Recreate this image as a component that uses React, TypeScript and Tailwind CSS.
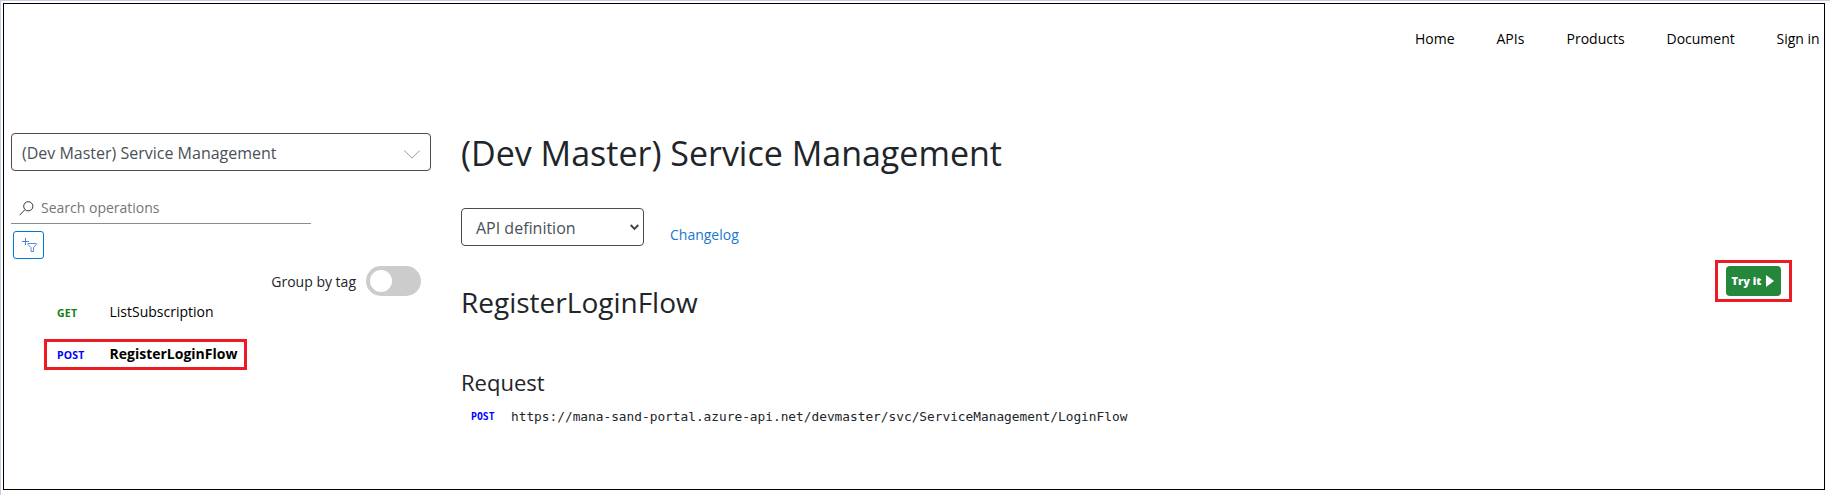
const navItems = [
  { label: "Home", width: "w-[81.5px]" },
  { label: "APIs", width: "w-[70px]" },
  { label: "Products", width: "w-[100px]" },
  { label: "Document", width: "w-[110px]" },
  { label: "Sign in", width: "w-[47.5px]" },
];

function NavBar() {
  return (
    <nav className="flex h-[71px] items-center justify-end pb-[2px] text-sm text-black">
      {navItems.map((item) => (
        <a key={item.label} className={`shrink-0 whitespace-nowrap ${item.width}`}>
          {item.label}
        </a>
      ))}
    </nav>
  );
}

function Sidebar() {
  return (
    <aside className="flex w-[457px] shrink-0 flex-col pl-[7px]">
      <div className="mt-[58px] flex h-[38px] w-[420px] items-center justify-between rounded border border-[#4a4a4f] pr-[10px] pl-[10px]">
        <span className="mt-[2px] text-base text-[#495057]">(Dev Master) Service Management</span>
        <svg className="mt-[4px]" width="16" height="9" viewBox="0 0 16 9" fill="none" stroke="#8c8c8c" strokeWidth="0.9">
          <path d="M0.3 0.5 L8 8.2 L15.7 0.5" />
        </svg>
      </div>

      <div className="mt-[20px] flex h-[33px] w-[300px] items-center border-b border-[#8c8c8c] pt-[2px] pl-[8px]">
        <svg width="15" height="15" viewBox="0 0 15 15" fill="none" stroke="#333333" strokeWidth="1">
          <circle cx="9.3" cy="5.3" r="4.6" />
          <path d="M5.8 8.8 L0.6 14.2" />
        </svg>
        <span className="ml-[7px] text-sm text-[#757575]">Search operations</span>
      </div>

      <button className="mt-[7px] ml-[2px] flex h-[28px] w-[31px] items-center justify-center rounded-[3px] border border-[#0078d4]">
        <svg width="16" height="16" viewBox="0 0 16 16" fill="none" stroke="#4a7fd0" strokeWidth="1">
          <path d="M4.5 1 V8 M1 4.5 H8" />
          <path d="M7 6.5 H15.2 V7.5 L12.5 10.6 V14.5 H10 V10.6 L7 7.5 Z" strokeWidth="0.9" />
        </svg>
      </button>

      <div className="mt-[7px] flex h-[30px] w-[410px] items-center justify-end">
        <span className="mt-[2px] mr-[10px] text-sm text-[#212529]">Group by tag</span>
        <span className="flex h-[30px] w-[55px] items-center rounded-full bg-[#cccccc] pl-[4px]">
          <span className="h-[22px] w-[22px] rounded-full bg-white" />
        </span>
      </div>

      <div className="flex h-[31px] items-center pl-[46px]">
        <span className="mt-[4px] w-[52.5px] text-[10.5px] font-bold tracking-[0.2px] text-[#108010]">GET</span>
        <span className="text-sm text-black">ListSubscription</span>
      </div>
      <div className="mt-[12px] ml-[33px] flex h-[31px] w-[203px] items-center border-[3px] border-[#ed1c24] pb-[2px] pl-[10px]">
        <span className="mt-[5px] w-[52.5px] text-[10.5px] font-bold tracking-[0.2px] text-[#0000ff]">POST</span>
        <span className="text-sm font-bold text-black">RegisterLoginFlow</span>
      </div>
    </aside>
  );
}

function TryIt() {
  return (
    <div className="mr-[32px] flex h-[42px] w-[77px] items-center justify-center border-[3px] border-[#ed1c24]">
      <button className="flex h-[30px] w-[55px] items-center justify-center rounded bg-[#24873c] pr-[1px] text-white">
        <span className="text-[11px] font-extrabold">Try it</span>
        <svg className="ml-[5px]" width="8" height="12" viewBox="0 0 8 12" fill="white">
          <path d="M0 0 L8 6 L0 12 Z" />
        </svg>
      </button>
    </div>
  );
}

function Details() {
  return (
    <main className="flex flex-1 flex-col text-[#212529]">
      <h1 className="mt-[53px] h-[50px] text-[34px] leading-[50px]">(Dev Master) Service Management</h1>
      <div className="mt-[30px] flex h-[38px]">
        <div className="flex h-[38px] w-[183px] items-center justify-between rounded border border-[#4a4a4f] pr-[4px] pl-[14px]">
          <span className="mt-[2px] text-base text-[#495057]">API definition</span>
          <svg width="9" height="7" viewBox="0 0 9 7" fill="none" stroke="#40464c" strokeWidth="2">
            <path d="M0.7 1 L4.5 4.9 L8.3 1" />
          </svg>
        </div>
        <a className="mt-[17px] ml-[26px] text-sm leading-5 text-[#1a77d0]">Changelog</a>
      </div>
      <div className="mt-[14px] flex h-[85px] items-start justify-between">
        <h2 className="mt-[22px] text-[28px] leading-[40px]">RegisterLoginFlow</h2>
        <TryIt />
      </div>
      <h3 className="mt-[21px] h-[32px] text-[22px] leading-[32px]">Request</h3>
      <div className="mt-[9px] flex h-[20px] items-center pl-[10px] font-['DejaVu_Sans_Mono',monospace]">
        <span className="mt-[1px] w-[40px] text-[9.8px] font-bold text-[#0000ff]">POST</span>
        <span className="text-[12.8px] whitespace-nowrap">
          https://mana-sand-portal.azure-api.net/devmaster/svc/ServiceManagement/LoginFlow
        </span>
      </div>
    </main>
  );
}

export default function App() {
  return (
    <div className="h-[495px] w-[1830px] overflow-hidden border-t border-l border-[#c5d0e2] bg-white pt-[2px] pl-[2px] font-['Open_Sans',sans-serif]">
      <div className="flex h-[487px] w-[1822px] flex-col border border-black">
        <NavBar />
        <div className="flex">
          <Sidebar />
          <Details />
        </div>
      </div>
    </div>
  );
}
